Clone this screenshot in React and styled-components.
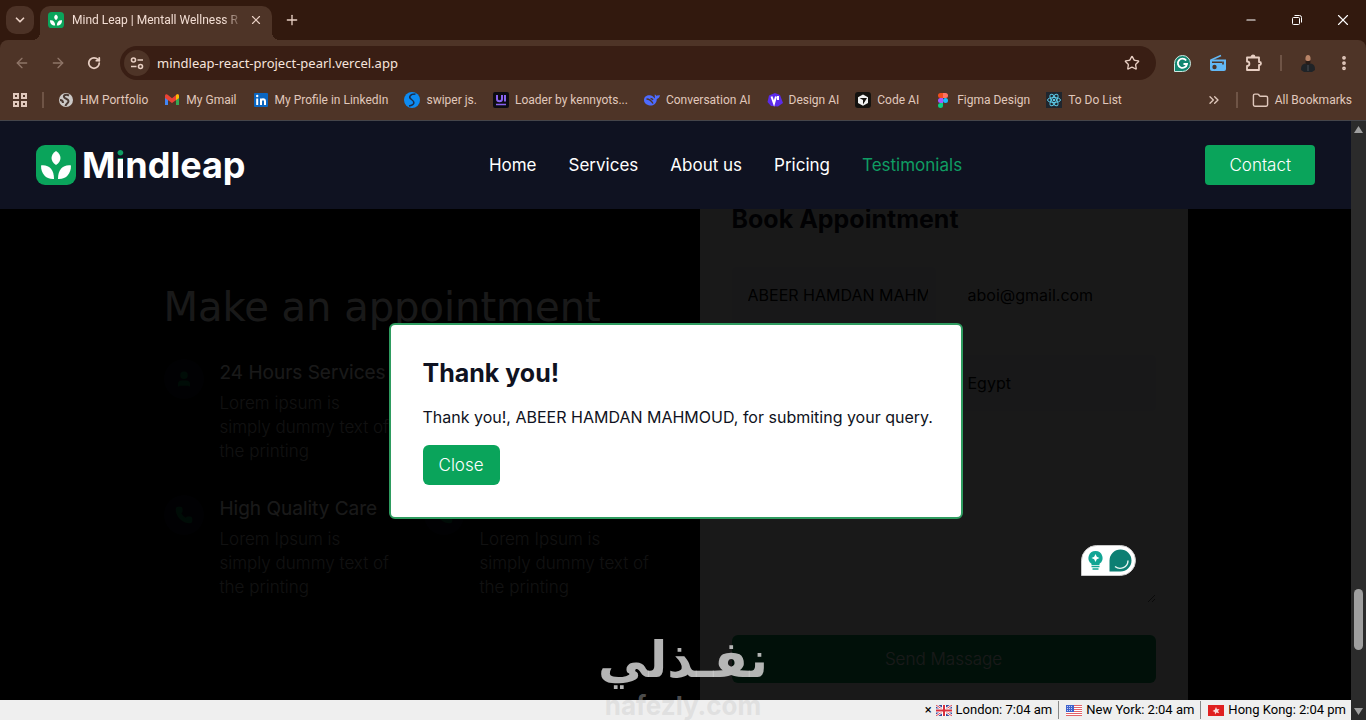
import React from 'react'
import styled, { createGlobalStyle, css } from 'styled-components'
import {
  ArrowLeft,
  ArrowRight,
  ChevronDown,
  ChevronsRight,
  EllipsisVertical,
  Folder,
  Minus,
  Phone,
  Plus,
  RotateCw,
  Star,
  User,
  X
} from 'lucide-react'

const chromeFont = 'Roboto, "Noto Sans", sans-serif'
const addressFont = '"Noto Sans", "Open Sans", sans-serif'
const siteFont = 'Inter, "Liberation Sans", sans-serif'
const wideFont = '"DejaVu Sans", sans-serif'

const GlobalStyle = createGlobalStyle`
  * {
    box-sizing: border-box;
  }

  body {
    margin: 0;
    background: #000;
    font-family: ${ siteFont };
    font-size: 16px;
    line-height: 24px;
  }

  h1, h2, h3, p {
    margin: 0;
  }

  button, input, textarea {
    font: inherit;
  }

  a {
    color: inherit;
    text-decoration: none;
  }

  svg {
    display: block;
    flex-shrink: 0;
  }
`

const Window = styled.div`
  height: 100vh;
  display: flex;
  flex-direction: column;
  overflow: hidden;
`

/* browser chrome */

const TabStrip = styled.div`
  height: 40px;
  padding-left: 6px;
  display: flex;
  align-items: center;
  background: #32190e;
  color: #f2ddd3;
  font-family: ${ chromeFont };
  font-size: 12px;
`

const IconButton = styled.button`
  width: ${ ({ $size }) => $size || 28 }px;
  height: 28px;
  padding: 0;
  border: 0;
  display: flex;
  align-items: center;
  justify-content: center;
  border-radius: ${ ({ $filled }) => $filled ? 10 : 14 }px;
  background: ${ ({ $filled }) => $filled ? '#4c3226' : 'transparent' };
  color: ${ ({ $dim }) => $dim ? '#8f7568' : '#e8cfc3' };
`

const Tab = styled.div`
  position: relative;
  width: 232px;
  height: 34px;
  margin-top: 6px;
  margin-left: 6px;
  padding: 0 4px 6px 8px;
  display: flex;
  align-items: center;
  border-radius: 10px 10px 0 0;
  background: #4e3427;

  &::before,
  &::after {
    content: '';
    position: absolute;
    bottom: 0;
    width: 8px;
    height: 8px;
  }

  &::before {
    right: 100%;
    background: radial-gradient(circle at 0 0, transparent 8px, #4e3427 8px);
  }

  &::after {
    left: 100%;
    background: radial-gradient(circle at 100% 0, transparent 8px, #4e3427 8px);
  }
`

const TabTitle = styled.span`
  flex: 1;
  margin-left: 8px;
  white-space: nowrap;
  mask-image: linear-gradient(to right, #000 88%, transparent);
`

const NewTab = styled.div`
  flex: 1;
  padding-left: 6px;
`

const Toolbar = styled.div`
  height: 46px;
  padding: 0 8px;
  display: flex;
  align-items: center;
  gap: 8px;
  border-radius: 8px 8px 0 0;
  background: #4e3427;
`

const ToolbarWrap = styled.div`
  background: #32190e;
`

const AddressBar = styled.div`
  flex: 1;
  height: 34px;
  margin: 0 4px;
  padding: 0 10px 0 4px;
  display: flex;
  align-items: center;
  gap: 7px;
  border-radius: 17px;
  background: #391e14;
  font-family: ${ addressFont };
  font-size: 13px;
`

const SiteInfo = styled.button`
  width: 26px;
  height: 26px;
  padding: 0;
  border: 0;
  display: flex;
  align-items: center;
  justify-content: center;
  border-radius: 50%;
  background: #4e3427;
  color: #e8cfc3;
`

const Address = styled.input`
  flex: 1;
  min-width: 0;
  padding: 0;
  border: 0;
  outline: 0;
  background: transparent;
  color: #f6e4dc;
`

const Separator = styled.span`
  width: 2px;
  height: 16px;
  margin: 0 ${ ({ $space }) => $space || 0 }px;
  background: #6f5446;
`

const Bookmarks = styled.nav`
  height: 35px;
  padding: 0 14px 6px 12px;
  display: flex;
  align-items: center;
  gap: 14px;
  border-bottom: 1px solid #45454a;
  background: #4e3427;
  color: #e0c8bc;
  font-family: ${ chromeFont };
  font-size: 12px;
`

const BookmarkList = styled.div`
  flex: 1;
  display: flex;
  gap: 16px;
`

const Bookmark = styled.a`
  display: flex;
  align-items: center;
  gap: 6px;
  white-space: nowrap;
`

/* website */

const Viewport = styled.div`
  position: relative;
  flex: 1;
  min-height: 0;
  display: flex;
`

const Site = styled.div`
  position: relative;
  flex: 1;
  min-width: 0;
  display: flex;
  flex-direction: column;
  overflow: hidden;
`

const Header = styled.header`
  position: relative;
  z-index: 3;
  flex-shrink: 0;
  height: 88px;
  padding: 0 36px;
  display: flex;
  align-items: center;
  justify-content: space-between;
  background: #0f1221;
  color: #fff;
`

const Logo = styled.a`
  display: flex;
  align-items: center;
  gap: 6px;
  font-size: 36px;
  font-weight: 700;
  line-height: 40px;
`

const LogoDot = styled.span`
  background: linear-gradient(#0f9d63 16px, #fff 16px);
  background-clip: text;
  color: transparent;
`

const Menu = styled.nav`
  display: flex;
  gap: 32px;
  font-size: 17px;
`

const MenuLink = styled.a`
  color: ${ ({ $active }) => $active ? '#0f9d63' : '#fff' };
`

const Button = styled.button`
  padding: ${ ({ $wide }) => $wide ? '8px 24px' : '8px 16px' };
  border: 0;
  border-radius: ${ ({ $wide }) => $wide ? 4 : 6 }px;
  background: #0aa45b;
  color: #fff;
  font-size: 17px;
  font-weight: 300;
  ${
    ({ $block }) => $block &&
      css`
        width: 100%;
        padding: 12px;
      `
  }
`

const Content = styled.main`
  flex: 1;
  min-height: 0;
  background: #000;
`

const Appointment = styled.section`
  max-width: 1024px;
  margin: -38px auto 0;
  display: grid;
  grid-template-columns: repeat(2, minmax(0, 1fr));
  align-items: center;
  gap: 48px;
  color: #fff;
`

const Title = styled.h1`
  margin-bottom: 32px;
  font-family: ${ wideFont };
  font-size: 40px;
  font-weight: 400;
  line-height: 40px;
  white-space: nowrap;
`

const Features = styled.div`
  display: grid;
  grid-template-columns: repeat(2, minmax(0, 1fr));
  gap: 32px;
`

const Feature = styled.article`
  grid-column: ${ ({ $column }) => $column };
  display: flex;
  gap: 16px;
`

const FeatureIcon = styled.span`
  width: 40px;
  height: 40px;
  flex-shrink: 0;
  display: flex;
  align-items: center;
  justify-content: center;
  border-radius: 50%;
  background: #0f1221;
  color: #077a45;
`

const FeatureBody = styled.div`
  display: flex;
  flex-direction: column;
  justify-content: flex-end;
  min-height: 104px;
`

const FeatureTitle = styled.h2`
  margin-bottom: 4px;
  font-size: 19px;
  font-weight: 400;
  line-height: 28px;
  white-space: nowrap;
`

const FeatureText = styled.p`
  color: #aaa;
  font-size: 17px;
  font-weight: 300;
  white-space: pre;
`

const Card = styled.form`
  padding: 32px;
  display: grid;
  grid-template-columns: repeat(2, minmax(0, 1fr));
  gap: 32px 16px;
  background: #fff;
  color: #0f1221;
`

const Wide = styled.div`
  grid-column: 1 / -1;
`

const Heading = styled.h2`
  font-size: 25px;
  font-weight: 700;
  line-height: 32px;
`

const Field = styled.input`
  width: 100%;
  height: 56px;
  padding: 16px 8px 16px 16px;
  border: 0;
  border-radius: 4px;
  background: ${ ({ $filled }) => $filled ? '#eef5f8' : '#fff' };
  color: #000;
`

const Message = styled.textarea`
  display: block;
  width: 100%;
  height: 160px;
  padding: 16px;
  border: 0;
`

const Overlay = styled.div`
  position: absolute;
  inset: 0;
  z-index: 2;
  display: flex;
  align-items: center;
  justify-content: center;
  background: rgba(0, 0, 0, .9);
`

const Dialog = styled.div`
  width: 100%;
  max-width: 574px;
  padding: 32px;
  display: flex;
  flex-direction: column;
  align-items: flex-start;
  gap: 16px;
  border: 2px solid #2e9b5f;
  border-radius: 6px;
  background: #fff;
  color: #0f1221;
`

const DialogText = styled.p`
  white-space: nowrap;
`

const Assistant = styled.div`
  position: absolute;
  right: 215px;
  bottom: 144px;
  z-index: 3;
  width: 55px;
  height: 31px;
  padding: 0 3px 0 5px;
  display: flex;
  align-items: center;
  justify-content: space-between;
  border: 1px solid #c9c9c9;
  border-radius: 16px 16px 16px 0;
  background: #fff;
`

const StatusBar = styled.footer`
  position: relative;
  z-index: 3;
  flex-shrink: 0;
  height: 20px;
  padding-right: 5px;
  display: flex;
  align-items: center;
  justify-content: flex-end;
  background: #efefef;
  color: #000;
  font-family: ${ chromeFont };
  font-size: 13px;
  line-height: 18px;
`

const Dismiss = styled.button`
  padding: 0 4px;
  border: 0;
  background: transparent;
`

const Clock = styled.span`
  display: flex;
  align-items: center;
  gap: 4px;

  & + & {
    margin-left: 6px;
    padding-left: 7px;
    border-left: 1px solid #888;
  }
`

const Watermark = styled.div`
  position: absolute;
  bottom: 0;
  left: 50%;
  z-index: 4;
  transform: translateX(-50%);
  display: flex;
  flex-direction: column;
  align-items: center;
  font-family: ${ wideFont };
  font-weight: 700;
  pointer-events: none;
`

const WatermarkName = styled.span`
  color: rgba(200, 200, 200, .9);
  font-size: 50px;
  line-height: 64px;
`

const WatermarkSite = styled.span`
  color: rgba(200, 200, 200, .4);
  font-family: ${ siteFont };
  font-size: 26px;
  line-height: 28px;
`

const Scrollbar = styled.div`
  width: 15px;
  padding: 5px 0;
  display: flex;
  flex-direction: column;
  align-items: center;
  background: #2b2b2b;
`

const Track = styled.div`
  flex: 1;
  display: flex;
  align-items: flex-end;
  padding-bottom: 58px;
`

const Thumb = styled.div`
  width: 9px;
  height: 61px;
  border-radius: 5px;
  background: #9f9f9f;
`

/* drawings */

const LeafLogo = ({ size }) => (
  <svg width={ size } height={ size } viewBox="0 0 40 40" aria-hidden="true">
    <rect width="40" height="40" rx="9" fill="#0aa45b" />
    <g fill="#fff">
      <path d="M20 6c3 2 4.500 4.500 4.500 7S23 18 20 20c-3-2-4.500-4.500-4.500-7S17 8 20 6z" />
      <path d="M5 20.500c8-1 13 4 13 13.500C10 34.500 5 29 5 20.500z" />
      <path d="M35 20.500c-8-1-13 4-13 13.500 8 .5 13-5 13-13.500z" />
    </g>
  </svg>
)

const Tune = () => (
  <svg width="14" height="14" viewBox="0 0 14 14" fill="none" stroke="currentColor" strokeWidth="1.600">
    <circle cx="3.500" cy="4" r="2" />
    <path d="M7.500 4H13M1 10.500h5.500" />
    <circle cx="10.500" cy="10.500" r="2" />
  </svg>
)

const Apps = () => (
  <svg width="16" height="16" viewBox="0 0 16 16" fill="none" stroke="#e0c8bc" strokeWidth="2">
    <path d="M2 2h4v4H2zM10 2h4v4h-4zM2 10h4v4H2zM10 10h4v4h-4z" />
  </svg>
)

const Restore = () => (
  <svg width="12" height="12" viewBox="0 0 12 12" fill="none" stroke="#fff">
    <rect x="1.500" y="3.500" width="7" height="7" rx="1" />
    <path d="M3.500 1.500h5a2 2 0 0 1 2 2v5" />
  </svg>
)

const Extensions = () => (
  <svg width="18" height="18" viewBox="0 0 18 18" fill="none" stroke="currentColor" strokeWidth="1.800" strokeLinejoin="round">
    <path d="M2 3.500h12v4.500h.5a1.300 1.300 0 0 1 0 3H14v5H2v-4c3.200 0 3.200-4.500 0-4.500z" />
    <path d="M6.500 3c0-2 3-2 3 0z" fill="currentColor" />
  </svg>
)

const Grammarly = () => (
  <svg width="17" height="17" viewBox="0 0 17 17">
    <path d="M.5 16.500V8.500a8 8 0 1 1 8 8z" fill="#11856f" stroke="#cfe9e2" />
    <path d="M12.200 5.600A4.600 4.600 0 1 0 13 9H9.500" fill="none" stroke="#fff" strokeWidth="1.800" />
  </svg>
)

const Radio = () => (
  <svg width="18" height="18" viewBox="0 0 18 18">
    <path d="M2 6L12 1.500" stroke="#62b8f5" strokeWidth="1.500" />
    <path d="M1 5.500h16V15a2 2 0 0 1-2 2H3a2 2 0 0 1-2-2z" fill="#62b8f5" />
    <path d="M3 8.200h10M14 7.500v3" stroke="#4e3427" strokeWidth="1.600" />
    <circle cx="5.500" cy="13" r="2.200" fill="#4e3427" />
  </svg>
)

const Avatar = () => (
  <svg width="18" height="18" viewBox="0 0 18 18">
    <path d="M2 16c0-4 1-6 4.500-6.500h5C15 10 16 12 16 16l-3 2H5z" fill="#1f2327" />
    <ellipse cx="9" cy="5" rx="2.600" ry="4" fill="#b98467" />
    <path d="M6.400 5.500c.6 2 4.600 2 5.200 0v2c0 4-5.200 4-5.200 0z" fill="#2a1d18" />
    <path d="M9 11v6" stroke="#4a4f55" />
  </svg>
)

const bookmarkIcons = {
  globe: (
    <>
      <circle cx="8" cy="8" r="7" fill="#ccc9c7" />
      <path d="M11 3.500C8 2 5.500 3 6 5s4.500 1.500 4.500 4S8 11.500 7.500 14M2 8c2 0 3 1 3 3" fill="none" stroke="#4a3a33" strokeWidth="2" />
    </>
  ),
  gmail: (
    <>
      <path d="M1 3.500V13h3V7z" fill="#4285f4" />
      <path d="M15 3.500V13h-3V7z" fill="#34a853" />
      <path d="M1 6V4c0-2 2-2 3-1l4 3.200L12 3c1-1 3-1 3 1v2l-7 5z" fill="#ea4335" />
      <path d="M12 3c1-1 3-1 3 1v2l-3 2z" fill="#fbbc04" />
    </>
  ),
  linkedin: (
    <>
      <rect x="1" y="1" width="14" height="14" rx="1" fill="#0a66c2" />
      <path d="M4.200 6.500V13M8 13V6.500M8 9.500c0-3 4-3 4 0V13" fill="none" stroke="#fff" strokeWidth="2" />
      <circle cx="4.200" cy="4" r="1.200" fill="#fff" />
    </>
  ),
  swiper: (
    <>
      <circle cx="8" cy="8" r="8" fill="#0d8bf2" />
      <path d="M11.500 2C6 2 4 5 7.500 7.500S11 13 5 14" fill="none" stroke="#1b2c4a" strokeWidth="1.500" />
    </>
  ),
  ui: (
    <>
      <rect width="16" height="16" rx="2" fill="#0c0c12" />
      <path d="M4 3v4c0 3 5 3 5 0V3M12 3v6.500" fill="none" stroke="#8a63f0" strokeWidth="2" />
      <path d="M3 12.500h10" stroke="#8a63f0" strokeWidth="1.500" />
    </>
  ),
  whale: (
    <>
      <path d="M0 8c0-4 4-5.500 7-4.500 2 .7 3 2 4 3 0-2-.5-2.500-.2-4 1 .3 1.500 1 1.700 1.500 1-.6 2-.5 3.500-.7-.3 2-1.500 3.200-3.200 3.700 0 4-2.800 6.500-5.800 6.500S0 12 0 8z" fill="#4d6bfe" />
      <path d="M2.500 7c3 0 5 2 6.500 4.500M6.500 6.500c1 0 2 .5 2.500 1.500" fill="none" stroke="#4e3427" strokeWidth="1.400" />
    </>
  ),
  design: (
    <>
      <path d="M8 1l5 2 3 8-5 3.500-7-.5-3.500-4L2 3.500z" fill="#5b2bea" />
      <path d="M4.500 4.500L7 11.500l2-7M11 4v4" fill="none" stroke="#fff" strokeWidth="2" />
    </>
  ),
  code: (
    <>
      <rect width="16" height="16" rx="3" fill="#14120f" />
      <path d="M8 2.500l5 2.800v5.600l-5 2.800-5-2.800V5.300z" fill="#f2f2f2" />
      <path d="M4.500 6h7.500l-4 6.500V8z" fill="#14120f" />
    </>
  ),
  figma: (
    <>
      <path d="M8 1H5.500a2.500 2.500 0 0 0 0 5H8z" fill="#f24e1e" />
      <path d="M8 1h2.500a2.500 2.500 0 0 1 0 5H8z" fill="#ff7262" />
      <path d="M8 6H5.500a2.500 2.500 0 0 0 0 5H8z" fill="#a259ff" />
      <circle cx="10.500" cy="8.500" r="2.500" fill="#1abcfe" />
      <path d="M8 11H5.500A2.500 2.500 0 1 0 8 13.500z" fill="#0acf83" />
    </>
  ),
  react: (
    <>
      <rect width="16" height="16" fill="#20262e" />
      <g fill="none" stroke="#5cc9e6">
        <ellipse cx="8" cy="8" rx="6.500" ry="2.500" />
        <ellipse cx="8" cy="8" rx="6.500" ry="2.500" transform="rotate(60 8 8)" />
        <ellipse cx="8" cy="8" rx="6.500" ry="2.500" transform="rotate(120 8 8)" />
      </g>
      <circle cx="8" cy="8" r="1.300" fill="#5cc9e6" />
    </>
  )
}

const flags = {
  uk: (
    <>
      <rect width="16" height="11" fill="#3a4a9c" />
      <path d="M0 0l16 11M16 0L0 11" stroke="#fff" strokeWidth="2.500" />
      <path d="M0 0l16 11M16 0L0 11" stroke="#d8414f" />
      <path d="M8 0v11M0 5.500h16" stroke="#fff" strokeWidth="4" />
      <path d="M8 0v11M0 5.500h16" stroke="#d8303f" strokeWidth="2" />
    </>
  ),
  us: (
    <>
      <rect width="16" height="11" fill="#fff" />
      <path d="M0 .5h16M0 2.500h16M0 4.500h16M0 6.500h16M0 8.500h16M0 10.500h16" stroke="#e2636a" />
      <rect width="8" height="7" fill="#3f62cc" />
      <path d="M1 1.500h6M1 3.500h6M1 5.500h6" stroke="#c3cff2" strokeDasharray="1 1" />
    </>
  ),
  hk: (
    <>
      <rect width="16" height="11" fill="#e02020" />
      <path d="M8 2l1 2.300 2.500-.3-1.500 2 1.200 2.300L8.500 7.500 7 9.500l-.2-2.600L4.500 6l2.300-1.200z" fill="#fbdada" />
    </>
  )
}

const bookmarks = [
  { icon: 'globe', label: 'HM Portfolio' },
  { icon: 'gmail', label: 'My Gmail' },
  { icon: 'linkedin', label: 'My Profile in LinkedIn' },
  { icon: 'swiper', label: 'swiper js.' },
  { icon: 'ui', label: 'Loader by kennyots...' },
  { icon: 'whale', label: 'Conversation AI' },
  { icon: 'design', label: 'Design AI' },
  { icon: 'code', label: 'Code AI' },
  { icon: 'figma', label: 'Figma Design' },
  { icon: 'react', label: 'To Do List' }
]

const menu = ['Home', 'Services', 'About us', 'Pricing', 'Testimonials']

const features = [
  {
    title: '24 Hours Services',
    text: 'Lorem ipsum is\nsimply dummy text of\nthe printing',
    icon: User,
    column: 1
  },
  {
    title: 'High Quality Care',
    text: 'Lorem Ipsum is\nsimply dummy text of\nthe printing',
    icon: Phone,
    column: 1
  },
  {
    text: 'Lorem Ipsum is\nsimply dummy text of\nthe printing',
    icon: Phone,
    column: 2
  }
]

const clocks = [
  { flag: 'uk', label: 'London: 7:04 am' },
  { flag: 'us', label: 'New York: 2:04 am' },
  { flag: 'hk', label: 'Hong Kong: 2:04 pm' }
]

const BrowserChrome = () => (
  <>
    <TabStrip>
      <IconButton $filled aria-label="Search tabs"><ChevronDown size={ 14 } strokeWidth={ 3 } /></IconButton>
      <Tab>
        <LeafLogo size={ 16 } />
        <TabTitle>Mind Leap | Mentall Wellness R</TabTitle>
        <IconButton $size={ 24 } aria-label="Close tab"><X size={ 14 } /></IconButton>
      </Tab>
      <NewTab>
        <IconButton aria-label="New tab"><Plus size={ 16 } /></IconButton>
      </NewTab>
      <IconButton $size={ 46 } aria-label="Minimize"><Minus size={ 14 } color="#fff" /></IconButton>
      <IconButton $size={ 46 } aria-label="Restore"><Restore /></IconButton>
      <IconButton $size={ 46 } aria-label="Close window"><X size={ 18 } color="#fff" strokeWidth={ 1.5 } /></IconButton>
    </TabStrip>
    <ToolbarWrap>
      <Toolbar>
        <IconButton $dim aria-label="Back"><ArrowLeft size={ 16 } /></IconButton>
        <IconButton $dim aria-label="Forward"><ArrowRight size={ 16 } /></IconButton>
        <IconButton aria-label="Reload"><RotateCw size={ 14 } strokeWidth={ 3 } /></IconButton>
        <AddressBar>
          <SiteInfo aria-label="Site information"><Tune /></SiteInfo>
          <Address aria-label="Address" defaultValue="mindleap-react-project-pearl.vercel.app" />
          <IconButton aria-label="Bookmark this page"><Star size={ 16 } /></IconButton>
        </AddressBar>
        <IconButton aria-label="Grammarly"><Grammarly /></IconButton>
        <IconButton aria-label="Radio"><Radio /></IconButton>
        <IconButton aria-label="Extensions"><Extensions /></IconButton>
        <Separator $space={ 4 } />
        <IconButton aria-label="Profile"><Avatar /></IconButton>
        <IconButton aria-label="Browser menu"><EllipsisVertical size={ 18 } strokeWidth={ 3 } /></IconButton>
      </Toolbar>
    </ToolbarWrap>
    <Bookmarks>
      <Apps />
      <Separator />
      <BookmarkList>
        {
          bookmarks.map(({ icon, label }) => (
            <Bookmark href="#" key={ label }>
              <svg width="16" height="16" viewBox="0 0 16 16">{ bookmarkIcons[icon] }</svg>
              { label }
            </Bookmark>
          ))
        }
      </BookmarkList>
      <ChevronsRight size={ 16 } />
      <Separator />
      <Bookmark href="#"><Folder size={ 17 } />All Bookmarks</Bookmark>
    </Bookmarks>
  </>
)

const App = () => (
  <Window>
    <GlobalStyle />
    <BrowserChrome />
    <Viewport>
      <Site>
        <Header>
          <Logo href="#">
            <LeafLogo size={ 40 } />
            <span>M<LogoDot>i</LogoDot>ndleap</span>
          </Logo>
          <Menu>
            {
              menu.map(item => (
                <MenuLink href="#" key={ item } $active={ item === 'Testimonials' }>{ item }</MenuLink>
              ))
            }
          </Menu>
          <Button $wide>Contact</Button>
        </Header>
        <Content>
          <Appointment>
            <div>
              <Title>Make an appointment</Title>
              <Features>
                {
                  features.map(({ title, text, icon: Icon, column }, index) => (
                    <Feature key={ index } $column={ column }>
                      <FeatureIcon><Icon size={ 18 } fill="currentColor" /></FeatureIcon>
                      <FeatureBody>
                        { title && <FeatureTitle>{ title }</FeatureTitle> }
                        <FeatureText>{ text }</FeatureText>
                      </FeatureBody>
                    </Feature>
                  ))
                }
              </Features>
            </div>
            <Card>
              <Wide><Heading>Book Appointment</Heading></Wide>
              <Field aria-label="Name" $filled defaultValue="ABEER HAMDAN MAHM" />
              <Field aria-label="Email" type="email" defaultValue="aboi@gmail.com" />
              <Field aria-label="Phone" type="tel" />
              <Field aria-label="Country" $filled defaultValue="Egypt" />
              <Wide><Message aria-label="Message" /></Wide>
              <Wide><Button $block type="button">Send Massage</Button></Wide>
            </Card>
          </Appointment>
        </Content>
        <Overlay>
          <Dialog role="dialog" aria-labelledby="thanks">
            <Heading id="thanks">Thank you!</Heading>
            <DialogText>Thank you!, ABEER HAMDAN MAHMOUD, for submiting your query.</DialogText>
            <Button>Close</Button>
          </Dialog>
        </Overlay>
        <Assistant>
          <svg width="17" height="21" viewBox="0 0 17 21">
            <path d="M8.500 1a7 7 0 0 0-4 12.800V15h8v-1.200A7 7 0 0 0 8.500 1z" fill="#12a594" />
            <path d="M4.500 16.500h8M5.500 19h6" stroke="#12a594" strokeWidth="1.500" />
            <path d="M8.500 4l1.300 2.700L12.500 8 9.800 9.300 8.500 12 7.200 9.300 4.500 8l2.700-1.300z" fill="#fff" />
          </svg>
          <svg width="23" height="23" viewBox="0 0 23 23">
            <path d="M.5 22.500v-11a11 11 0 1 1 11 11z" fill="#0d7f73" />
            <path d="M6 17.500c5 4 13 1 13-6" fill="none" stroke="#e8f6f3" strokeWidth="1.400" />
          </svg>
        </Assistant>
        <StatusBar>
          <Dismiss aria-label="Dismiss clocks">×</Dismiss>
          {
            clocks.map(({ flag, label }) => (
              <Clock key={ flag }>
                <svg width="16" height="11" viewBox="0 0 16 11">{ flags[flag] }</svg>
                { label }
              </Clock>
            ))
          }
        </StatusBar>
      </Site>
      <Scrollbar>
        <svg width="9" height="7" viewBox="0 0 9 7"><path d="M4.500 0L9 7H0z" fill="#9f9f9f" /></svg>
        <Track><Thumb /></Track>
        <svg width="9" height="7" viewBox="0 0 9 7"><path d="M4.500 7L0 0h9z" fill="#9f9f9f" /></svg>
      </Scrollbar>
      <Watermark>
        <WatermarkName lang="ar" dir="rtl">نفـذلي</WatermarkName>
        <WatermarkSite>nafezly.com</WatermarkSite>
      </Watermark>
    </Viewport>
  </Window>
)

export default App
